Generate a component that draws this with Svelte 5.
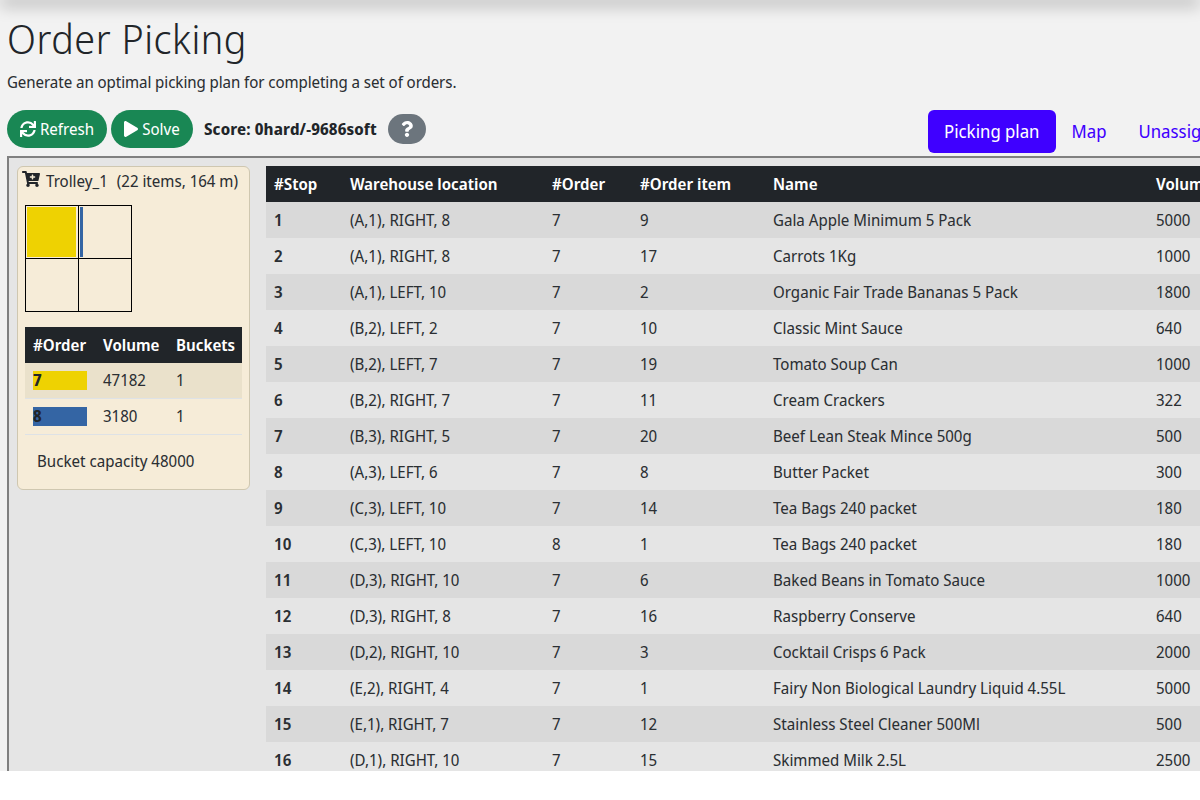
<script>
  const rows = [
    [1, '(A,1), RIGHT, 8', 7, 9, 'Gala Apple Minimum 5 Pack', 5000],
    [2, '(A,1), RIGHT, 8', 7, 17, 'Carrots 1Kg', 1000],
    [3, '(A,1), LEFT, 10', 7, 2, 'Organic Fair Trade Bananas 5 Pack', 1800],
    [4, '(B,2), LEFT, 2', 7, 10, 'Classic Mint Sauce', 640],
    [5, '(B,2), LEFT, 7', 7, 19, 'Tomato Soup Can', 1000],
    [6, '(B,2), RIGHT, 7', 7, 11, 'Cream Crackers', 322],
    [7, '(B,3), RIGHT, 5', 7, 20, 'Beef Lean Steak Mince 500g', 500],
    [8, '(A,3), LEFT, 6', 7, 8, 'Butter Packet', 300],
    [9, '(C,3), LEFT, 10', 7, 14, 'Tea Bags 240 packet', 180],
    [10, '(C,3), LEFT, 10', 8, 1, 'Tea Bags 240 packet', 180],
    [11, '(D,3), RIGHT, 10', 7, 6, 'Baked Beans in Tomato Sauce', 1000],
    [12, '(D,3), RIGHT, 8', 7, 16, 'Raspberry Conserve', 640],
    [13, '(D,2), RIGHT, 10', 7, 3, 'Cocktail Crisps 6 Pack', 2000],
    [14, '(E,2), RIGHT, 4', 7, 1, 'Fairy Non Biological Laundry Liquid 4.55L', 5000],
    [15, '(E,1), RIGHT, 7', 7, 12, 'Stainless Steel Cleaner 500Ml', 500],
    [16, '(D,1), RIGHT, 10', 7, 15, 'Skimmed Milk 2.5L', 2500]
  ];
</script>

<div class="page">
  <div class="topshadow"></div>
  <h1>Order Picking</h1>
  <p class="lead">Generate an optimal picking plan for completing a set of orders.</p>
  <div class="toolbar">
    <button class="pill refresh">
      <svg viewBox="0 0 512 512" class="ic"><path d="M440.65 12.57l4 82.77A247.16 247.16 0 0 0 255.83 8C134.73 8 33.91 94.92 12.29 209.82A12 12 0 0 0 24.09 224h49.05a12 12 0 0 0 11.67-9.26 175.91 175.91 0 0 1 317-56.94l-101.46-4.86a12 12 0 0 0-12.57 12v47.41a12 12 0 0 0 12 12H500a12 12 0 0 0 12-12V12a12 12 0 0 0-12-12h-47.37a12 12 0 0 0-11.98 12.57zM255.83 432a175.61 175.61 0 0 1-146-77.8l101.8 4.87a12 12 0 0 0 12.57-12v-47.4a12 12 0 0 0-12-12H12a12 12 0 0 0-12 12V500a12 12 0 0 0 12 12h47.35a12 12 0 0 0 12-12.6l-4.15-82.57A247.17 247.17 0 0 0 255.83 504c121.11 0 221.93-86.92 243.55-201.82a12 12 0 0 0-11.8-14.18h-49.05a12 12 0 0 0-11.67 9.26A175.86 175.86 0 0 1 255.83 432z"/></svg>
      Refresh
    </button>
    <button class="pill solve">
      <svg viewBox="0 0 448 512" class="ic play"><path d="M424.4 214.7L72.4 6.6C43.8-10.3 0 6.1 0 47.9V464c0 37.5 40.7 60.1 72.4 41.3l352-208c31.4-18.5 31.5-64.1 0-82.6z"/></svg>
      Solve
    </button>
    <b class="score">Score: 0hard/-9686soft</b>
    <button class="help" aria-label="Help">
      <svg viewBox="0 0 384 512"><path d="M202.021 0C122.202 0 70.503 32.703 29.914 91.026c-7.363 10.58-5.093 25.086 5.178 32.874l43.138 32.709c10.373 7.865 25.132 6.026 33.253-4.148 25.049-31.381 43.63-49.449 82.757-49.449 30.764 0 68.816 19.799 68.816 49.631 0 22.552-18.617 34.134-48.993 51.164-35.423 19.86-82.299 44.576-82.299 106.405V320c0 13.255 10.745 24 24 24h72.471c13.255 0 24-10.745 24-24v-5.773c0-42.86 125.268-44.645 125.268-160.627C377.504 66.256 286.902 0 202.021 0zM192 373.459c-38.196 0-69.271 31.075-69.271 69.271 0 38.195 31.075 69.27 69.271 69.27s69.271-31.075 69.271-69.271-31.075-69.27-69.271-69.27z"/></svg>
    </button>
    <nav class="tabs">
      <a class="tab active" href="#plan">Picking plan</a>
      <a class="tab" href="#map">Map</a>
      <a class="tab" href="#unassigned">Unassigned</a>
    </nav>
  </div>
  <section class="panel">
    <aside class="card">
      <div class="card-title">
        <svg viewBox="0 0 576 512" class="cart"><path fill-rule="evenodd" d="M528.12 301.319l47.273-208C578.806 78.301 567.391 64 551.99 64H159.208l-9.166-44.81C147.758 8.021 137.93 0 126.529 0H24C10.745 0 0 10.745 0 24v16c0 13.255 10.745 24 24 24h69.883l70.248 343.435C147.325 417.1 136 435.222 136 456c0 30.928 25.072 56 56 56s56-25.072 56-56c0-15.674-6.447-29.835-16.824-40h209.647C430.447 426.165 424 440.326 424 456c0 30.928 25.072 56 56 56s56-25.072 56-56c0-22.172-12.888-41.332-31.579-50.405l5.517-24.276c3.413-15.018-8.002-29.319-23.403-29.319H218.117l-6.545-32h293.145c11.206 0 20.92-7.754 23.403-18.681zM408 168h-48v-40c0-8.837-7.163-16-16-16h-16c-8.837 0-16 7.163-16 16v40h-48c-8.837 0-16 7.163-16 16v16c0 8.837 7.163 16 16 16h48v40c0 8.837 7.163 16 16 16h16c8.837 0 16-7.163 16-16v-40h48c8.837 0 16-7.163 16-16v-16c0-8.837-7.163-16-16-16z"/></svg>
        <span>Trolley_1</span><span class="meta">(22 items, 164 m)</span>
      </div>
      <div class="buckets">
        <div class="bucket split"><i class="fill yellow"></i><i class="fill blue"></i></div>
        <div class="bucket"></div>
        <div class="bucket"></div>
        <div class="bucket"></div>
      </div>
      <table class="orders">
        <thead><tr><th class="o1">#Order</th><th class="o2">Volume</th><th class="o3">Buckets</th></tr></thead>
        <tbody>
          <tr class="shade"><td><b class="swatch yellowbg">7</b></td><td>47182</td><td>1</td></tr>
          <tr><td><b class="swatch bluebg">8</b></td><td>3180</td><td>1</td></tr>
        </tbody>
      </table>
      <p class="capacity">Bucket capacity 48000</p>
    </aside>
    <table class="stops">
      <thead>
        <tr><th class="c1">#Stop</th><th class="c2">Warehouse location</th><th class="c3">#Order</th><th class="c4">#Order item</th><th class="c5">Name</th><th class="c6">Volume</th></tr>
      </thead>
      <tbody>
        {#each rows as r}
          <tr><td><b>{r[0]}</b></td><td>{r[1]}</td><td>{r[2]}</td><td>{r[3]}</td><td>{r[4]}</td><td>{r[5]}</td></tr>
        {/each}
      </tbody>
    </table>
  </section>
</div>

<style>
  :global(body) { margin: 0; background: #fff; }
  .page {
    position: relative;
    height: 771px;
    overflow: hidden;
    background: #f2f2f2;
    color: #2b2f33;
    font-family: "Noto Sans Display", "Noto Sans", sans-serif;
    font-size: 16px;
    line-height: 24px;
  }
  .topshadow {
    position: absolute;
    left: 0; right: 0; top: -10px;
    height: 10px;
    box-shadow: 0 6px 16px rgba(0,0,0,.25);
  }
  h1 {
    margin: 0;
    padding: 15px 0 0 7px;
    font-size: 40px;
    font-weight: 300;
    line-height: 48px;
    letter-spacing: 0.55px;
    color: #212529;
  }
  .lead { margin: 7px 0 0 7px; font-size: 16px; line-height: 24px; letter-spacing: -0.08px; }
  .toolbar {
    display: flex;
    align-items: flex-start;
    margin-top: 16px;
    padding-left: 7px;
    height: 46px;
  }
  .pill {
    display: flex;
    align-items: center;
    justify-content: center;
    gap: 4px;
    height: 38px;
    padding: 0;
    margin-right: 4px;
    border: 0;
    border-radius: 19px;
    background: #198754;
    color: #fff;
    font: inherit;
  }
  .refresh { width: 100px; }
  .solve { width: 82px; }
  .ic { flex: none; width: 16px; height: 16px; fill: #fff; }
  .play { width: 14px; }
  .score { margin: 7px 0 0 7px; letter-spacing: 0.14px; color: #212529; }
  .help {
    display: flex;
    align-items: center;
    justify-content: center;
    flex: none;
    width: 38px;
    height: 30px;
    position: absolute;
    left: 388px;
    top: 114px;
    padding: 0;
    border: 0;
    border-radius: 15px;
    background: #6c757d;
  }
  .help svg { width: 12px; height: 16px; fill: #fff; }
  .tabs { position: absolute; left: 928px; top: 110px; display: flex; white-space: nowrap; font-size: 17.8px; line-height: 25px; }
  .tab { padding: 9px 16px; color: #3f00ff; text-decoration: none; border-radius: 6px; }
  .tab.active { background: #3f00ff; color: #fff; }
  .panel {
    display: flex;
    align-items: flex-start;
    gap: 16px;
    margin-left: 7px;
    width: 1400px;
    height: 700px;
    box-sizing: border-box;
    padding: 8px;
    border: 2px solid #808080;
    border-right: 0;
    background: #e5e5e5;
  }
  .card {
    flex: none;
    box-sizing: border-box;
    width: 233px;
    height: 324px;
    padding: 0 7px;
    background: #f6ecd8;
    border: 1px solid #cfc7b0;
    border-radius: 6px;
  }
  .card-title { display: flex; align-items: center; height: 28px; white-space: nowrap; }
  .cart { flex: none; width: 18px; height: 16px; margin: 0 6px 4px -3px; fill: #212529; }
  .meta { margin-left: 9px; }
  .buckets {
    display: grid;
    grid-template-columns: 53px 53px;
    grid-template-rows: 53px 53px;
    width: 107px;
    height: 107px;
    margin-top: 10px;
    box-sizing: border-box;
    border-top: 1px solid #000;
    border-left: 1px solid #000;
  }
  .bucket {
    position: relative;
    border-right: 1px solid #000;
    border-bottom: 1px solid #000;
  }
  .fill { position: absolute; top: 1px; bottom: 1px; }
  .yellow { left: 1px; width: 49px; background: #eed202; }
  .blue { left: 54px; width: 3px; background: #3465a4; }
  .orders { width: 217px; table-layout: fixed; margin-top: 15px; border-collapse: collapse; }
  .orders th {
    box-sizing: border-box;
    background: #212529; color: #fff; text-align: left; font-weight: 600;
    padding: 6px 8px; height: 36px; white-space: nowrap;
  }
  .orders th.o1 { width: 70px; }
  .orders th.o2 { width: 73px; }
  .orders td { padding: 8px; border-bottom: 1px solid #dee2e6; height: 19px; line-height: 19px; }
  .orders b { color: #212529; }
  .shade td { background: #eae1cb; }
  .swatch { display: block; width: 54px; height: 19px; }
  .yellowbg { background: #eed202; }
  .bluebg { background: #3465a4; }
  .capacity { margin: 14px 0 0 12px; }
  .stops { flex: none; width: 1100px; table-layout: fixed; border-collapse: collapse; }
  .stops th { background: #212529; color: #fff; text-align: left; height: 36px; padding: 0 8px; box-sizing: border-box; font-weight: 600; white-space: nowrap; }
  .stops td { height: 36px; padding: 0 8px; box-sizing: border-box; white-space: nowrap; }
  .stops td b { font-weight: 600; }
  .stops tbody tr:nth-child(odd) td { background: #d9d9d9; }
  .c1 { width: 76px; } .c2 { width: 202px; } .c3 { width: 88px; } .c4 { width: 133px; } .c5 { width: 383px; }
</style>
